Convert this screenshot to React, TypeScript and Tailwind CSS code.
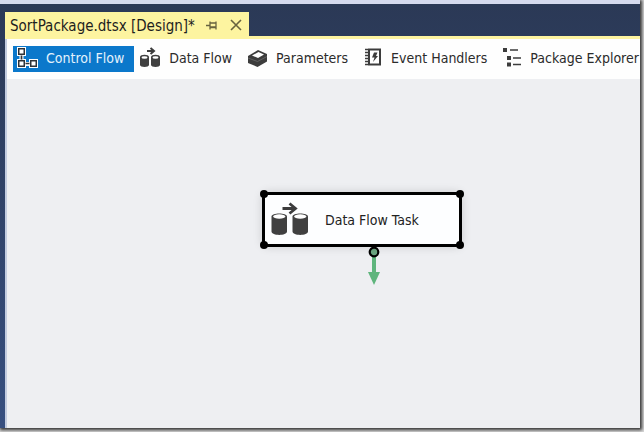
import React from 'react';

const ControlFlowIcon = () => (
  <svg width="22" height="22" viewBox="0 0 22 22" fill="none" aria-hidden="true">
    <path d="M5.500 8v6M9 17h5" stroke="#fff" strokeWidth="4" />
    <g fill="#fff">
      <rect x="1" y="0" width="9" height="9" />
      <rect x="1" y="12" width="9" height="9" />
      <rect x="13" y="12" width="9" height="9" />
    </g>
    <g fill="#fff" stroke="#2f3338" strokeWidth="1.500">
      <rect x="2.750" y="1.750" width="5.500" height="5.500" />
      <rect x="2.750" y="13.750" width="5.500" height="5.500" />
      <rect x="14.750" y="13.750" width="5.500" height="5.500" />
    </g>
    <path d="M5.500 8.500v4M9.500 16.500h4" stroke="#2f3338" strokeWidth="1.700" />
  </svg>
);

const DataFlowIcon = () => (
  <svg width="38" height="38" viewBox="0 0 38 38" fill="none" aria-hidden="true">
    <path d="M11.500 7.500H24M18.500 2.500l6 5-6 5" stroke="#3c3c3c" strokeWidth="2.800" />
    {[0, 21].map((x) => (
      <g key={x} transform={`translate(${x} 0)`}>
        <path d="M.5 15.500c0-4 15.500-4 15.500 0V30.500c0 4.500-15.500 4.500-15.500 0z" fill="#404040" />
        <ellipse cx="8.250" cy="15.500" rx="6.200" ry="2.200" fill="#fff" />
      </g>
    ))}
  </svg>
);

const SmallDataFlowIcon = () => (
  <svg width="22" height="22" viewBox="0 0 22 22" fill="none" aria-hidden="true">
    <path d="M8 4h6M11.500 1l3.500 3-3.500 3" stroke="#3c3c3c" strokeWidth="2" />
    {[1, 12].map((x) => (
      <g key={x} transform={`translate(${x} -1)`}>
        <path d="M0 11c0-3 9-3 9 0v8c0 2.500-9 2.500-9 0z" fill="#404040" />
        <ellipse cx="4.500" cy="11.500" rx="3" ry="1.200" fill="#fff" />
      </g>
    ))}
  </svg>
);

const ParametersIcon = () => (
  <svg width="21" height="22" viewBox="0 0 21 22" aria-hidden="true">
    <path d="M1 9l10-6 9 4v7.500L10.500 20 1 16z" fill="#3c3c3c" />
    <path d="M5 8.500L11.500 5l5.500 2.500-6 3.500z" fill="#fff" />
    <path d="M1 11l9.500 3.500L20 9.500" fill="none" stroke="#707070" strokeWidth=".7" />
  </svg>
);

const EventHandlersIcon = () => (
  <svg width="20" height="22" viewBox="0 0 20 22" fill="none" aria-hidden="true">
    <path d="M6 2.500h11v15H6z" stroke="#3c3c3c" strokeWidth="2" />
    <path d="M2 2.500h3M2 5.500h3M2 8.500h3M2 11.500h3M2 14.500h3M2 17.500h3" stroke="#3c3c3c" strokeWidth="1.300" />
    <path d="M11 5.500h3.500L13 9h2l-5 6 1.500-4.500H9z" fill="#3c3c3c" />
  </svg>
);

const ExplorerIcon = () => (
  <svg width="20" height="22" viewBox="0 0 20 22" aria-hidden="true">
    <path d="M1 1h4v4H1zM5 9h4v4H5zM5 15.500h4v4H5z" fill="#3c3c3c" />
    <path d="M8 3h8M11 11h8M11 17.500h8" stroke="#3c3c3c" strokeWidth="1.300" />
  </svg>
);

const TABS = [
  { label: 'Control Flow', icon: <ControlFlowIcon /> },
  { label: 'Data Flow', icon: <SmallDataFlowIcon /> },
  { label: 'Parameters', icon: <ParametersIcon /> },
  { label: 'Event Handlers', icon: <EventHandlersIcon /> },
  { label: 'Package Explorer', icon: <ExplorerIcon /> },
];

const DocumentTab: React.FC = () => (
  <div className="flex h-[27px] items-center self-start bg-[#fdf4a0] pl-[5px] pr-1.5 text-[#1e1e1e]">
    <span className="whitespace-nowrap text-[15px] leading-5">SortPackage.dtsx [Design]*</span>
    <button type="button" aria-label="Pin tab" className="ml-2.5">
      <svg width="14" height="14" viewBox="0 0 14 14" fill="none" stroke="#68633f" strokeWidth="1.300">
        <path d="M1 6.500h4M5 2.500v8M5 4h6v4.500H5M5 8h6M11 2.500v8" />
      </svg>
    </button>
    <button type="button" aria-label="Close tab" className="ml-2.5">
      <svg width="14" height="14" viewBox="0 0 14 14" fill="none" stroke="#68633f" strokeWidth="1.600">
        <path d="M2 1l10 10M12 1L2 11" />
      </svg>
    </button>
  </div>
);

const DesignerTabs: React.FC = () => (
  <div role="tablist" className="flex h-10 shrink-0 items-center gap-0.5 bg-[#fefefe] pl-1.5">
    {TABS.map((tab, i) => (
      <button
        key={tab.label}
        type="button"
        role="tab"
        aria-selected={i === 0}
        className={`flex h-[26px] shrink-0 items-center gap-2 whitespace-nowrap pb-0.5 pl-[3px] pr-2.5 text-sm leading-5 last:pr-0 ${
          i === 0 ? 'bg-[#0b78cb] text-[#e4f2fc]' : 'text-[#2b2b2b]'
        }`}
      >
        {tab.icon}
        <span>{tab.label}</span>
      </button>
    ))}
  </div>
);

const TaskNode: React.FC = () => (
  <div className="absolute left-[255px] top-[113px] w-[200px]">
    <div className="relative flex h-[55px] items-center gap-4 rounded-md border-[3px] border-black bg-[#fdfeff] pl-1.5 shadow-[0_0_10px_rgba(0,0,0,0.15)]">
      <DataFlowIcon />
      <span className="text-sm leading-5 text-[#222]">Data Flow Task</span>
      <i className="absolute -left-[5px] -top-[5px] size-2 rounded-full bg-black" />
      <i className="absolute -right-[5px] -top-[5px] size-2 rounded-full bg-black" />
      <i className="absolute -bottom-[5px] -left-[5px] size-2 rounded-full bg-black" />
      <i className="absolute -bottom-[5px] -right-[5px] size-2 rounded-full bg-black" />
    </div>
    <div className="flex justify-center pl-6">
      <svg width="14" height="40" viewBox="0 0 14 40" aria-hidden="true">
        <path d="M7 8v20" stroke="#5fb57d" strokeWidth="4" />
        <path d="M1 25h12L7 38z" fill="#5fb57d" />
        <circle cx="7" cy="5" r="4.300" fill="#6ba681" stroke="#000" strokeWidth="2.200" />
      </svg>
    </div>
  </div>
);

const App: React.FC = () => {
  return (
    <div className="h-screen overflow-hidden bg-[#d8d8d8] pb-1 pr-1 font-['DejaVu_Sans_Condensed','DejaVu_Sans',sans-serif]">
      <div className="flex h-full flex-col border-t-4 border-[#d5daee] bg-gradient-to-b from-[#2b3956] to-[#374f80] shadow-[1px_1px_3px_1px_#333]">
        <div className="flex h-8 shrink-0 items-end pl-[5px] pt-2">
          <DocumentTab />
        </div>
        <div className="ml-[5px] flex min-h-0 flex-1 flex-col border-l-2 border-[#c3cce0]">
          <div className="-ml-0.5 h-[3px] shrink-0 bg-[#fdf4a0]" />
          <DesignerTabs />
          <main className="relative flex-1 overflow-hidden bg-[#eeeff2]">
            <TaskNode />
          </main>
        </div>
      </div>
    </div>
  );
};

export default App;
